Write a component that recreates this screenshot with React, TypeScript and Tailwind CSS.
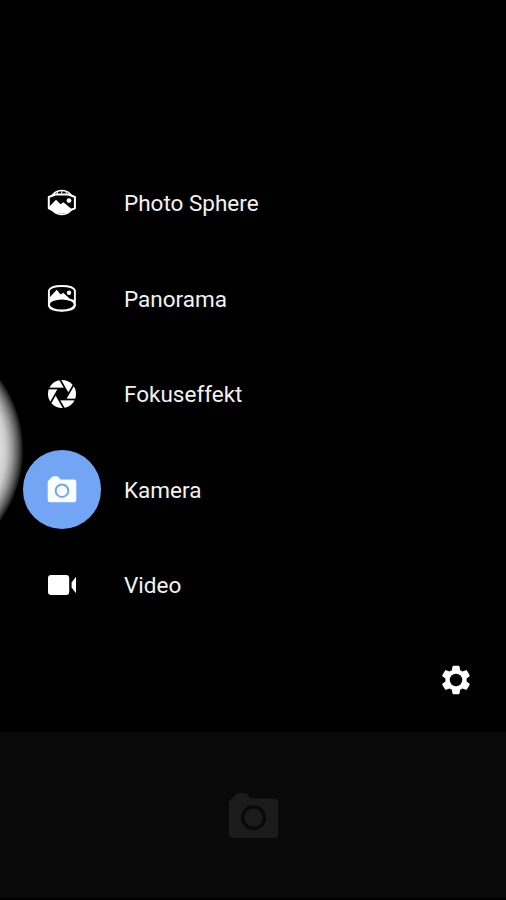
import React from "react";

interface IconProps {
    className?: string;
}

interface ModeProps {
    text: string;
    icon: React.ReactNode;
    active?: boolean;
}

function PhotoSphereIcon() {
    return (
        <svg viewBox="0 0 32 32" fill="none" className="h-8 w-8 text-white">
            <circle cx="15.8" cy="15.6" r="12" stroke="currentColor" strokeWidth="1.5" />
            <path
                d="M15.8 3.5v4M15.8 24v4M12 4.5L10.5 7.5M19.6 4.5L21 7.5M12 27L10.5 24M19.6 27L21 24"
                stroke="currentColor"
                strokeWidth="1"
            />
            <path
                d="M2.8 10L9.5 7.5H22.2L28.9 10V21.3L22.2 24H9.5L2.8 21.3Z"
                fill="#000"
                stroke="currentColor"
                strokeWidth="2"
                strokeLinejoin="round"
            />
            <path d="M3 20L10 12.8L14.5 17.2L17.5 15.2L25.5 22L21.5 26.5H10L3 22Z" fill="currentColor" />
            <circle cx="23" cy="13.6" r="2.4" fill="currentColor" />
        </svg>
    );
}

function PanoramaIcon() {
    return (
        <svg viewBox="0 0 32 32" fill="none" className="h-8 w-8 text-white">
            <path
                d="M2.9 8.5C4 5.5 9 4 15.8 4S28 5.5 28.9 8.5V24C28 27 22.5 28.7 15.8 28.7S4 27 2.9 24Z"
                stroke="currentColor"
                strokeWidth="1.9"
                strokeLinejoin="round"
            />
            <path d="M3.5 15.5L10.8 7.8L14.6 12.4L17.2 10.8L23.5 16.5L28 18V22H3.5Z" fill="currentColor" />
            <ellipse cx="15.8" cy="22.5" rx="12.8" ry="5.9" fill="#000" stroke="currentColor" strokeWidth="1.6" />
            <circle cx="23" cy="10.7" r="2.2" fill="currentColor" />
        </svg>
    );
}

function ApertureIcon() {
    const angles = [0, 60, 120, 180, 240, 300];

    return (
        <svg viewBox="-16 -16 32 32" className="h-8 w-8 text-white">
            <circle r="14" fill="currentColor" />
            <path d="M-3.2 -5.5H3.2L6.4 0L3.2 5.5H-3.2L-6.4 0Z" fill="#000" />
            {angles.map((a) => (
                <path key={a} d="M3 -5.5H-15" transform={`rotate(${a})`} stroke="#000" strokeWidth="1.7" />
            ))}
        </svg>
    );
}

function CameraIcon({ className }: IconProps) {
    return (
        <svg viewBox="0 0 32 32" className={className}>
            <path
                fill="currentColor"
                fillRule="evenodd"
                d="M2.6 6.2L6 3Q6.8 2.3 7.8 2.3H10.6Q11.600 2.3 12.300 3L14.600 5.500H28Q30.300 5.500 30.300 7.800V26Q30.300 28.300 28 28.300H4Q1.700 28.300 1.700 26V8.200Q1.700 7 2.600 6.200ZM16 9.400A7.300 7.300 0 1 0 16 24A7.300 7.300 0 1 0 16 9.400ZM16 11.400A5.300 5.300 0 1 1 16 22A5.300 5.300 0 1 1 16 11.400Z"
            />
        </svg>
    );
}

function VideoIcon() {
    return (
        <svg viewBox="0 0 32 32" fill="currentColor" className="h-8 w-8 text-white">
            <rect x="2" y="6" width="21.2" height="20" rx="3" />
            <path d="M25.6 13.5L30 7.8V24.2L25.6 18.5Z" />
        </svg>
    );
}

function GearIcon() {
    return (
        <svg viewBox="0 0 24 24" fill="currentColor" className="h-[34px] w-[34px] text-white">
            <path d="M19.43 12.98c.04-.32.07-.64.07-.98s-.03-.66-.07-.98l2.11-1.65c.19-.15.24-.42.12-.64l-2-3.46c-.12-.22-.39-.3-.61-.22l-2.49 1c-.52-.4-1.08-.73-1.69-.98l-.38-2.65C14.46 2.18 14.25 2 14 2h-4c-.25 0-.46.18-.49.42l-.38 2.65c-.61.25-1.17.59-1.69.98l-2.49-1c-.23-.09-.49 0-.61.22l-2 3.46c-.13.22-.07.49.12.64l2.11 1.65c-.04.32-.07.65-.07.98s.03.66.07.98l-2.11 1.65c-.19.15-.24.42-.12.64l2 3.46c.12.22.39.3.61.22l2.49-1c.52.4 1.08.73 1.69.98l.38 2.65c.03.24.24.42.49.42h4c.25 0 .46-.18.49-.42l.38-2.65c.61-.25 1.17-.59 1.69-.98l2.49 1c.23.09.49 0 .61-.22l2-3.46c.12-.22.07-.49-.12-.64z" />
            <circle cx="12" cy="12" r="4.4" fill="#000" />
        </svg>
    );
}

function Mode(props: ModeProps) {
    return (
        <li className="flex h-[95.6px] items-center">
            <button
                className={`${
                    props.active ? "bg-[#72a5f4]" : ""
                } flex h-[78.5px] w-[78.5px] items-center justify-center rounded-full`}
            >
                {props.icon}
            </button>
            <span className="mt-px ml-[23px] text-[22.5px] leading-none text-[#f2f2f2]">{props.text}</span>
        </li>
    );
}

export default function App() {
    return (
        <div className="relative flex h-[900px] w-[506px] flex-col overflow-hidden bg-black font-['Roboto',sans-serif]">
            {/* Bright edge of the drawer handle */}
            <div className="absolute top-[329px] left-[-219px] h-[242px] w-[242px] rounded-full bg-[radial-gradient(circle_closest-side,#e0e0e0_80%,#cbcbcb_86%,#999_91%,#555_96%,#111_100%)]" />

            <ul className="relative mt-[155px] ml-[22.5px] flex flex-col">
                <Mode text="Photo Sphere" icon={<PhotoSphereIcon />} />
                <Mode text="Panorama" icon={<PanoramaIcon />} />
                <Mode text="Fokuseffekt" icon={<ApertureIcon />} />
                <Mode text="Kamera" icon={<CameraIcon className="h-8 w-8 text-[#f8feff]" />} active />
                <Mode text="Video" icon={<VideoIcon />} />
            </ul>

            <div className="flex flex-1 items-start justify-end pt-[30.5px] pr-[33.5px]">
                <button>
                    <GearIcon />
                </button>
            </div>

            <div className="flex h-[168px] items-center justify-center border-b-2 border-black bg-[#090909]">
                <CameraIcon className="mt-[3px] h-[55px] w-[55px] text-[#1b1b1b]" />
            </div>
        </div>
    );
}
